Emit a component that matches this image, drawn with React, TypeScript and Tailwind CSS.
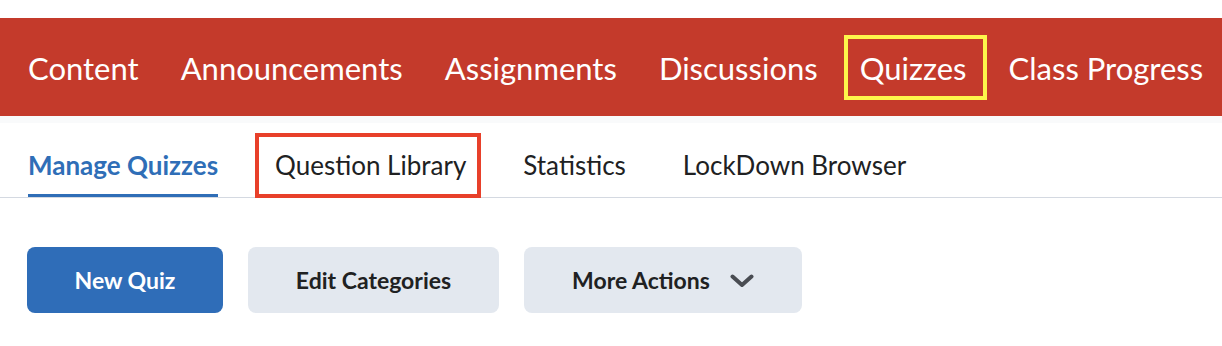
const topNav = ['Content', 'Announcements', 'Assignments', 'Discussions', 'Quizzes', 'Class Progress']
const tabs = ['Manage Quizzes', 'Question Library', 'Statistics', 'LockDown Browser']

export default function App() {
  return (
    <div className="w-[1222px] h-[346px] bg-white overflow-hidden" style={{ fontFamily: 'Lato, "Noto Sans", sans-serif' }}>
      <div className="h-[18px]" />
      <nav className="h-[98px] bg-[#c43a2b] flex items-center pl-[28px] gap-[42px] whitespace-nowrap">
        {topNav.map((item) => (
          <span key={item} className="relative text-white text-[31px] leading-[36px] mt-[2px]">
            {item}
            {item === 'Quizzes' && (
              <span className="absolute -left-[16px] -right-[20px] -top-[15px] -bottom-[14px] border-4 border-[#fdf54b]" />
            )}
          </span>
        ))}
      </nav>
      <div className="h-[7px] bg-[#f9fafb]" />
      <div className="flex gap-[57px] pl-[28px] border-b border-[#d4d9e1] whitespace-nowrap">
        {tabs.map((t, i) => (
          <div key={t} className="relative h-[74px] pt-[26px]">
            <span
              className={
                i === 0
                  ? 'text-[26px] leading-[32px] font-bold text-[#2f6eb7]'
                  : 'text-[26px] leading-[32px] text-[#202122]'
              }
            >
              {t}
            </span>
            {i === 0 && <div className="absolute left-0 right-0 bottom-0 h-[3px] bg-[#2f6eb7]" />}
            {t === 'Question Library' && (
              <div className="absolute top-[10px] -bottom-[1px] -left-[20px] -right-[15px] border-4 border-[#e8402a]" />
            )}
          </div>
        ))}
      </div>
      <div className="flex gap-[25px] pl-[27px] pt-[49px] whitespace-nowrap">
        <button className="h-[66px] w-[196px] rounded-[8px] bg-[#2f6db8] text-white text-[23px] font-bold">
          New Quiz
        </button>
        <button className="h-[66px] w-[251px] rounded-[8px] bg-[#e3e8ef] text-[#202122] text-[23px] font-bold">
          Edit Categories
        </button>
        <button className="h-[66px] w-[278px] rounded-[8px] bg-[#e3e8ef] text-[#202122] text-[23px] font-bold flex items-center justify-center gap-[20px]">
          More Actions
          <svg width="24" height="14" viewBox="0 0 24 14" fill="none" className="mt-[1px]">
            <polyline points="2.5,2.5 12,11 21.5,2.5" stroke="#494c52" strokeWidth="4" strokeLinecap="round" strokeLinejoin="round" />
          </svg>
        </button>
      </div>
    </div>
  )
}
